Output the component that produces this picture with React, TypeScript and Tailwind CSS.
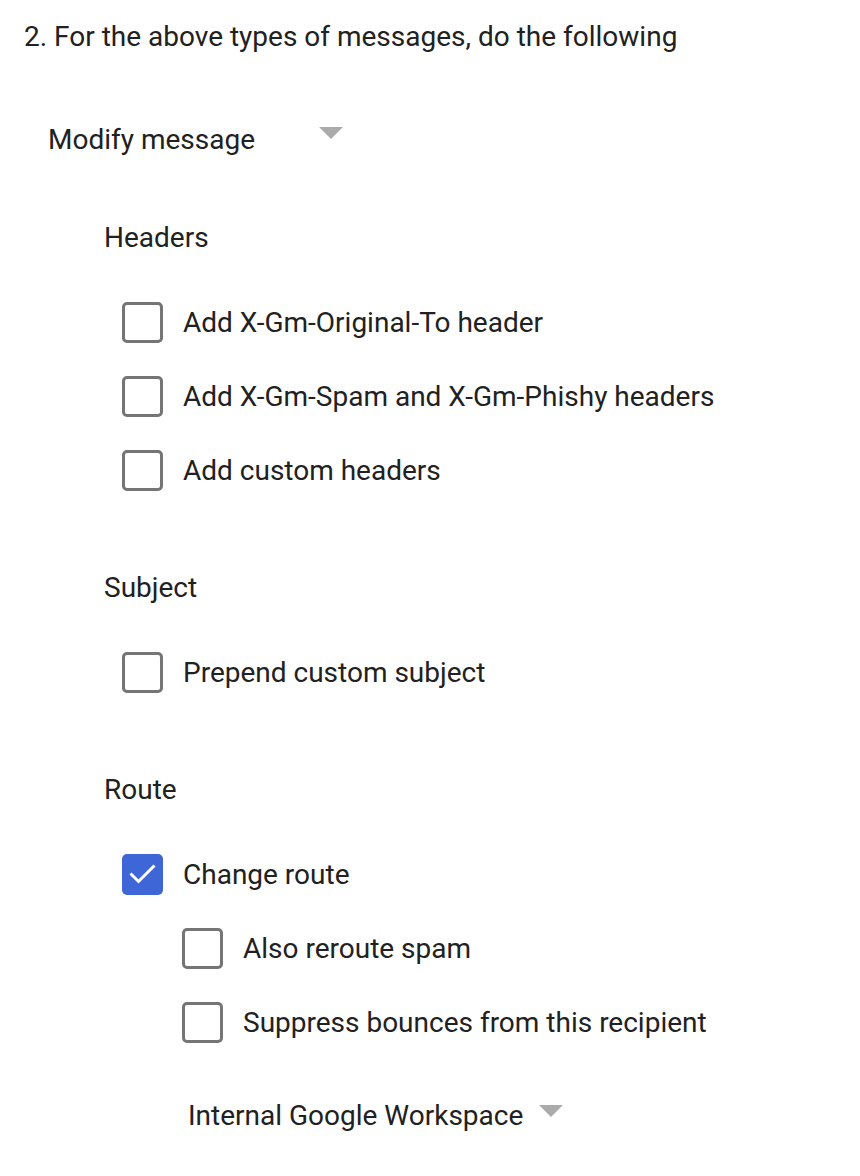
import React from "react";

function Arrow() {
  return (
    <svg width="24" height="12" viewBox="0 0 24 12" className="shrink-0">
      <path d="M0 0 L24 0 L12 12 Z" fill="#ababab" />
    </svg>
  );
}

function Checkbox({ checked = false }: { checked?: boolean }) {
  if (checked) {
    return (
      <div className="w-[41px] h-[41px] rounded-[5px] bg-[#3e66d6] flex items-center justify-center shrink-0">
        <svg width="32" height="32" viewBox="0 0 32 32">
          <path d="M3.5 15.5 L11.5 23.5 L27.5 7.5" fill="none" stroke="#ffffff" strokeWidth="3" />
        </svg>
      </div>
    );
  }
  return <div className="w-[41px] h-[41px] rounded-[5px] border-[3.5px] border-[#757575] bg-white shrink-0" />;
}

function CheckRow({ label, checked, className }: { label: string; checked?: boolean; className: string }) {
  return (
    <div className={`flex items-center h-[40px] ${className}`}>
      <Checkbox checked={checked} />
      <span className="ml-[20px] pt-[2px]">{label}</span>
    </div>
  );
}

export default function App() {
  return (
    <div
      className="w-[860px] h-[1176px] bg-white text-[#212121] text-[28px] leading-[40px] pt-[17px] overflow-hidden"
      style={{ fontFamily: "Roboto, 'Noto Sans', sans-serif" }}
    >
      <div className="pl-[24px] h-[40px]">2. For the above types of messages, do the following</div>

      <div className="pl-[48px] mt-[63px] h-[40px] flex items-center">
        <span className="w-[271px]">Modify message</span>
        <div className="-mt-[14px]"><Arrow /></div>
      </div>

      <div className="pl-[104px] mt-[58px] h-[40px]">Headers</div>
      <CheckRow className="pl-[122px] mt-[44px]" label="Add X-Gm-Original-To header" />
      <CheckRow className="pl-[122px] mt-[34px]" label="Add X-Gm-Spam and X-Gm-Phishy headers" />
      <CheckRow className="pl-[122px] mt-[34px]" label="Add custom headers" />

      <div className="pl-[104px] mt-[78px] h-[40px]">Subject</div>
      <CheckRow className="pl-[122px] mt-[44px]" label="Prepend custom subject" />

      <div className="pl-[104px] mt-[78px] h-[40px]">Route</div>
      <CheckRow className="pl-[122px] mt-[44px]" label="Change route" checked />
      <CheckRow className="pl-[182px] mt-[34px]" label="Also reroute spam" />
      <CheckRow className="pl-[182px] mt-[34px]" label="Suppress bounces from this recipient" />

      <div className="pl-[188px] mt-[54px] h-[40px] flex items-center">
        <span>Internal Google Workspace</span>
        <div className="ml-[16px] -mt-[10px]"><Arrow /></div>
      </div>
    </div>
  );
}
